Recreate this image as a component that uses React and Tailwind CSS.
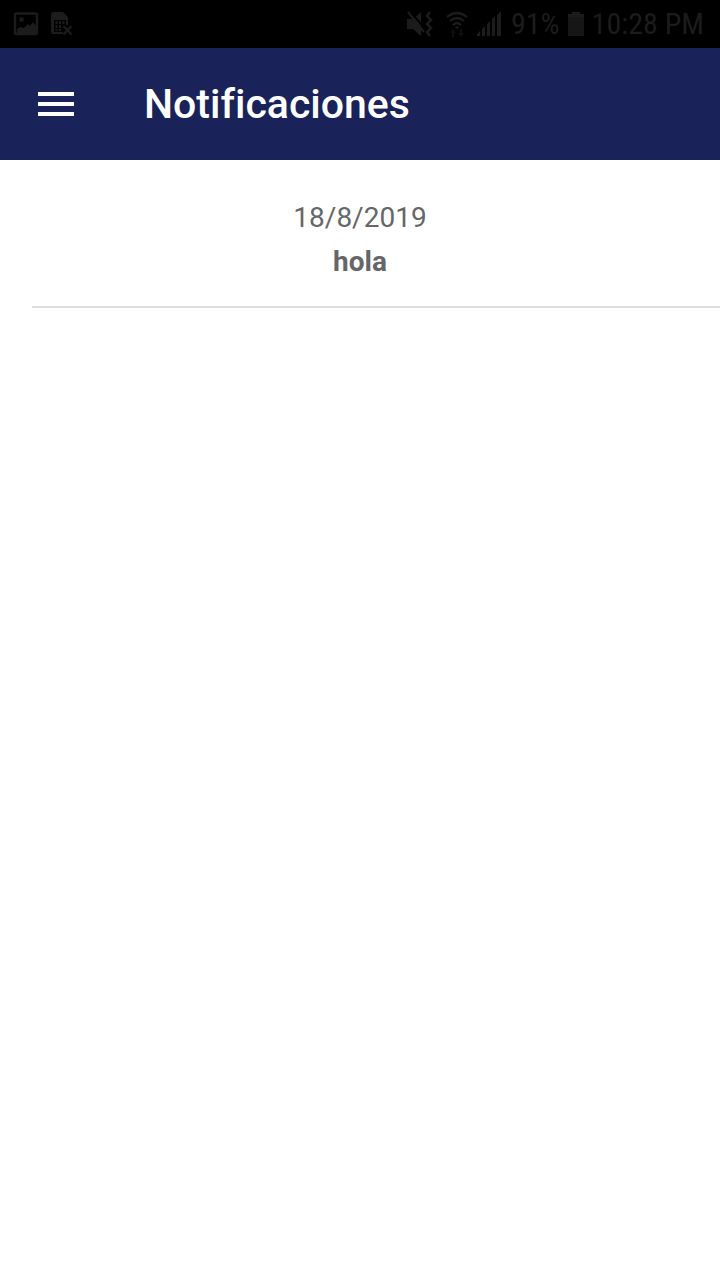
import React from "react";

function StatusBar() {
  return (
    <div className="flex h-12 items-center justify-between bg-black pr-4 pl-3 text-[#1c1c1c]">
      <div className="flex items-center gap-2">
        <svg className="size-7" viewBox="0 -1 28 28" aria-hidden="true">
          <rect x="3" y="2.5" width="22" height="20.5" rx="1.5" fill="none" stroke="currentColor" strokeWidth="2.4" />
          <rect x="7.5" y="6.5" width="4" height="4" fill="currentColor" />
          <path d="M5 22v-4l3-2 4 1 4-4 2 2 3-4 3 4v7z" fill="currentColor" />
        </svg>
        <svg className="size-7" viewBox="0 -1 28 28" aria-hidden="true">
          <path d="M5 1h10l5 5v8h-2V9H6v12h9v2H5a2 2 0 0 1-2-2V3a2 2 0 0 1 2-2z" fill="currentColor" />
          <path d="M7.500 10v3h2v-3zM11 10v3h2v-3zM14.500 10v3h2v-3zM7.500 14v3h2v-3zM11 14v3h2v-3zM7.500 18v2h2v-2zM11 18v2h2v-2z" fill="currentColor" />
          <path d="M15.500 15l8 8.500m0-8.500l-8 8.500" stroke="currentColor" strokeWidth="2.200" />
        </svg>
      </div>
      <div className="flex items-center gap-2">
        <div className="flex items-center gap-3">
          <svg className="h-8 w-7" viewBox="0 0 28 32" aria-hidden="true">
            <path d="M2 11h6l8-7v24l-8-7H2z" fill="currentColor" />
            <path d="M4 2l17 20" stroke="black" strokeWidth="2" />
            <path d="M3 4l16 20" stroke="currentColor" strokeWidth="2.200" />
            <path d="M25 4l-3 4 4 4-4 4 4 4-4 4 3 4" fill="none" stroke="currentColor" strokeWidth="2.400" />
          </svg>
          <svg className="h-8 w-6" viewBox="0 0 24 32" aria-hidden="true">
            <path d="M2 9q10-8 20 0M5 13q7-6 14 0M8 17q4-4 8 0" fill="none" stroke="currentColor" strokeWidth="2.200" />
            <path d="M12 21l-2.500-2.500h5z" fill="currentColor" />
            <path d="M8 21l3 4H9v4H7v-4H5zM16 29l-3-4h2v-4h2v4h2z" fill="currentColor" opacity="0.500" />
          </svg>
        </div>
        <svg className="h-8 w-6.5" viewBox="1 0 26 32" aria-hidden="true">
          <path d="M1 28v-2l3-3v5zM6 28v-7l3-3v10zM11 28V16l3-3v15zM16 28V11l3-3v20zM21 28V7l4-4v25z" fill="currentColor" />
        </svg>
        <span className="font-['Roboto_Condensed','Roboto',sans-serif] text-[30px] leading-8">91%</span>
        <svg className="h-8 w-4" viewBox="0 0 16 32" aria-hidden="true">
          <path d="M4 4h8v2h4v3H0V6h4z" fill="currentColor" />
          <path d="M0 9h16v19H0z" fill="#161616" />
        </svg>
        <span className="font-['Roboto_Condensed','Roboto',sans-serif] text-[30px] leading-8">10:28 PM</span>
      </div>
    </div>
  );
}

export default function App() {
  return (
    <div className="min-h-screen bg-white font-['Roboto',sans-serif]">
      <StatusBar />
      <header className="flex h-28 items-center gap-12 bg-[#1a2359] px-4 text-white">
        <button type="button" aria-label="Menú" className="flex size-20 items-center justify-center">
          <svg className="h-6 w-9" viewBox="0 0 36 24" fill="currentColor" aria-hidden="true">
            <path d="M0 0h36v4H0zM0 10h36v4H0zM0 20h36v4H0z" />
          </svg>
        </button>
        <h1 className="text-[41px] leading-12 font-medium [font-variant-ligatures:none]">Notificaciones</h1>
      </header>
      <main className="pl-8">
        <article className="border-b-2 border-[#dedede] pt-9 pr-8 pb-[22px] text-center text-[28px] leading-11 text-[#666666]">
          <p>18/8/2019</p>
          <h2 className="font-bold">hola</h2>
        </article>
      </main>
    </div>
  );
}
